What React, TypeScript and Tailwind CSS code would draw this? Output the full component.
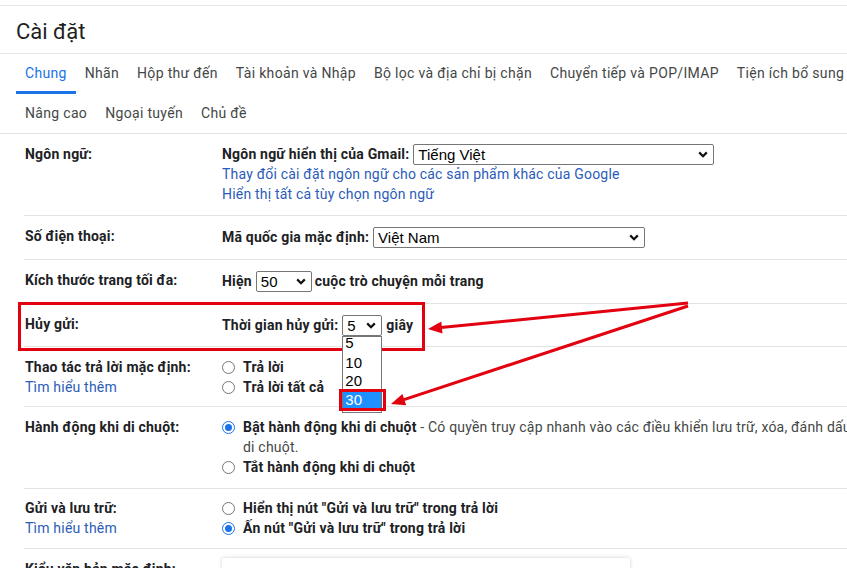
import clsx from "clsx";

const Chevron = () => (
  <svg width="10" height="7" viewBox="0 0 10 7" className="shrink-0">
    <path d="M1.2 1.4 L5 5.2 L8.8 1.4" stroke="#111" strokeWidth="2.2" fill="none" />
  </svg>
);

const Select = ({ value, className }: { value: string; className: string }) => (
  <span
    className={clsx(
      "inline-flex items-center justify-between h-[21px] border border-[#767676] rounded-[2px] pl-[4px] pr-[5px] bg-white font-['Liberation_Sans',sans-serif] text-[15px] font-normal text-black leading-none tracking-normal",
      className
    )}
  >
    <span>{value}</span>
    <Chevron />
  </span>
);

const Radio = ({ checked }: { checked?: boolean }) => (
  <span
    className={clsx(
      "w-[13px] h-[13px] rounded-full border flex items-center justify-center mr-[8px] shrink-0",
      checked ? "border-[#1a73e8] border-[1.5px]" : "border-[#767676]"
    )}
  >
    {checked && <span className="w-[7px] h-[7px] rounded-full bg-[#1a73e8]" />}
  </span>
);

const Row = ({
  label,
  link,
  className,
  children,
}: {
  label: string;
  link?: boolean;
  className: string;
  children: React.ReactNode;
}) => (
  <div className={clsx("flex border-b border-[#e3e3e3] leading-5", className)}>
    <div className="w-[198px] pl-[1px] shrink-0">
      <div className="font-bold">{label}</div>
      {link && <div className="text-[#2b5cb8]">Tìm hiểu thêm</div>}
    </div>
    <div className="flex-1">{children}</div>
  </div>
);

const tabs1 = [
  "Chung",
  "Nhãn",
  "Hộp thư đến",
  "Tài khoản và Nhập",
  "Bộ lọc và địa chỉ bị chặn",
  "Chuyển tiếp và POP/IMAP",
  "Tiện ích bổ sung",
];
const tabs2 = ["Nâng cao", "Ngoại tuyến", "Chủ đề"];

export default function App() {
  return (
    <div className="relative w-[847px] h-[568px] overflow-hidden bg-white font-['Roboto',sans-serif] text-[14px] tracking-[0.2px] text-[#202124]">
      <div className="h-[5px]" />
      <div className="h-[49px] border-y border-[#e8e8e8] flex items-center pl-4 pt-[3px] text-[22px] tracking-normal text-[#1f1f1f]">
        Cài đặt
      </div>
      <div className="pl-4 border-b border-[#e3e3e3] whitespace-nowrap text-[#444746] tracking-[0.32px]">
        <div className="flex h-[40px]">
          {tabs1.map((t, i) => (
            <div
              key={t}
              className={clsx(
                "px-[9px] flex items-center border-b-[3px] pt-[2px] shrink-0",
                i === 0 ? "border-[#1a73e8] text-[#1a73e8]" : "border-transparent"
              )}
            >
              {t}
            </div>
          ))}
        </div>
        <div className="flex h-[39px]">
          {tabs2.map((t) => (
            <div key={t} className="px-[9px] flex items-center">
              {t}
            </div>
          ))}
        </div>
      </div>

      <div className="ml-[24px]">
        <Row label="Ngôn ngữ:" className="pt-[10px] pb-[11px]">
          <div className="flex items-center h-5 font-bold">
            Ngôn ngữ hiển thị của Gmail:
            <Select value="Tiếng Việt" className="w-[301px] ml-[4px]" />
          </div>
          <div className="text-[#2b5cb8]">Thay đổi cài đặt ngôn ngữ cho các sản phẩm khác của Google</div>
          <div className="text-[#2b5cb8]">Hiển thị tất cả tùy chọn ngôn ngữ</div>
        </Row>
        <Row label="Số điện thoại:" className="pt-[10px] pb-[11px]">
          <div className="flex items-center h-[22px] font-bold">
            Mã quốc gia mặc định:
            <Select value="Việt Nam" className="w-[272px] ml-[4px]" />
          </div>
        </Row>
        <Row label="Kích thước trang tối đa:" className="pt-[10px] pb-[11px]">
          <div className="flex items-center h-[22px] font-bold">
            Hiện
            <Select value="50" className="w-[56px] ml-[4px] mr-[3px]" />
            cuộc trò chuyện mỗi trang
          </div>
        </Row>
        <Row label="Hủy gửi:" className="pt-[10px] pb-[10px]">
          <div className="flex items-center h-[22px] font-bold">
            Thời gian hủy gửi:
            <span className="relative ml-[4px] mr-[4px]">
              <Select value="5" className="w-[40px]" />
              <div className="absolute left-0 top-full w-[40px] h-[77px] border border-[#767676] bg-white overflow-hidden font-['Liberation_Sans',sans-serif] text-[15px] font-normal text-black tracking-normal z-10">
                <div className="h-[18px] leading-[18px] pl-[2px] -mt-[3px]">5</div>
                <div className="h-[19px] leading-[19px] pl-[2px] mt-[1px]">10</div>
                <div className="h-[18px] leading-[18px] pl-[2px]">20</div>
                <div className="h-[19px] leading-[19px] pl-[2px] bg-[#1e90ff] text-white">30</div>
              </div>
            </span>
            giây
          </div>
        </Row>
        <Row label="Thao tác trả lời mặc định:" link className="pt-[10px] pb-[9px]">
          <div className="flex items-center h-5 font-bold">
            <Radio />
            Trả lời
          </div>
          <div className="flex items-center h-5 font-bold">
            <Radio />
            Trả lời tất cả
          </div>
        </Row>
        <Row label="Hành động khi di chuột:" className="pt-[10px] pb-[11px]">
          <div className="flex items-center h-5 whitespace-nowrap">
            <Radio checked />
            <span className="font-bold">Bật hành động khi di chuột</span>
            <span className="text-[#444746]">
              &nbsp;- Có quyền truy cập nhanh vào các điều khiển lưu trữ, xóa, đánh dấu là đã đọc và tạm ẩn khi
            </span>
          </div>
          <div className="pl-[21px] text-[#444746]">di chuột.</div>
          <div className="flex items-center h-5 font-bold">
            <Radio />
            Tắt hành động khi di chuột
          </div>
        </Row>
        <Row label="Gửi và lưu trữ:" link className="pt-[9px] pb-[10px]">
          <div className="flex items-center h-5 font-bold">
            <Radio />
            Hiển thị nút "Gửi và lưu trữ" trong trả lời
          </div>
          <div className="flex items-center h-5 font-bold">
            <Radio checked />
            Ấn nút "Gửi và lưu trữ" trong trả lời
          </div>
        </Row>
        <Row label="Kiểu văn bản mặc định:" className="pt-[10px] pb-[10px]">
          <div className="w-[408px] h-[60px] -mt-[1px] rounded-[2px] bg-white shadow-[0_0_4px_rgba(0,0,0,0.18)]" />
        </Row>
      </div>

      {/* annotation overlay */}
      <div className="absolute left-[18px] top-[302px] w-[407px] h-[49px] border-[3px] border-[#e3000f]" />
      <div className="absolute left-[339px] top-[389px] w-[47px] h-[22px] border-[3px] border-[#e3000f] z-20" />
      <svg className="absolute inset-0 pointer-events-none z-20" width="847" height="568">
        <line x1="688" y1="303" x2="441" y2="327.6" stroke="#e3000f" strokeWidth="3" />
        <polygon points="428,329 441.3,321.6 442.5,333.6" fill="#e3000f" />
        <line x1="688" y1="306" x2="404" y2="399.6" stroke="#e3000f" strokeWidth="3" />
        <polygon points="391,404 402.4,393.9 406.2,405.3" fill="#e3000f" />
      </svg>
    </div>
  );
}
